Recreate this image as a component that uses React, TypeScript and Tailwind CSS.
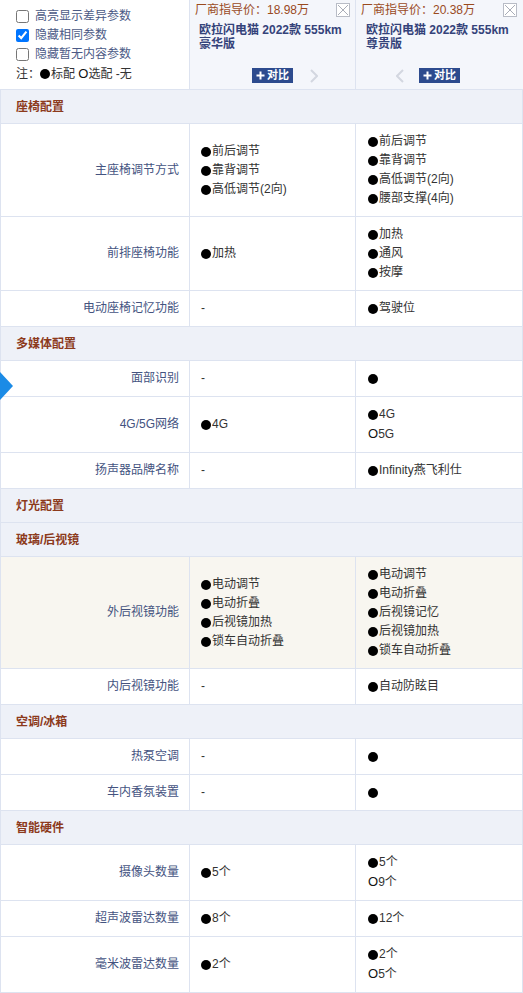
import React from "react";

type Row = { label: string; a: string[]; b: string[]; hl?: boolean };
type Section = { title: string; rows: Row[] };

const sections: Section[] = [
  {
    title: "座椅配置",
    rows: [
      { label: "主座椅调节方式", a: ["●前后调节", "●靠背调节", "●高低调节(2向)"], b: ["●前后调节", "●靠背调节", "●高低调节(2向)", "●腰部支撑(4向)"] },
      { label: "前排座椅功能", a: ["●加热"], b: ["●加热", "●通风", "●按摩"] },
      { label: "电动座椅记忆功能", a: ["-"], b: ["●驾驶位"] },
    ],
  },
  {
    title: "多媒体配置",
    rows: [
      { label: "面部识别", a: ["-"], b: ["●"] },
      { label: "4G/5G网络", a: ["●4G"], b: ["●4G", "O5G"] },
      { label: "扬声器品牌名称", a: ["-"], b: ["●Infinity燕飞利仕"] },
    ],
  },
  { title: "灯光配置", rows: [] },
  {
    title: "玻璃/后视镜",
    rows: [
      { label: "外后视镜功能", a: ["●电动调节", "●电动折叠", "●后视镜加热", "●锁车自动折叠"], b: ["●电动调节", "●电动折叠", "●后视镜记忆", "●后视镜加热", "●锁车自动折叠"], hl: true },
      { label: "内后视镜功能", a: ["-"], b: ["●自动防眩目"] },
    ],
  },
  {
    title: "空调/冰箱",
    rows: [
      { label: "热泵空调", a: ["-"], b: ["●"] },
      { label: "车内香氛装置", a: ["-"], b: ["●"] },
    ],
  },
  {
    title: "智能硬件",
    rows: [
      { label: "摄像头数量", a: ["●5个"], b: ["●5个", "O9个"] },
      { label: "超声波雷达数量", a: ["●8个"], b: ["●12个"] },
      { label: "毫米波雷达数量", a: ["●2个"], b: ["●2个", "O5个"] },
    ],
  },
];

function CloseBox() {
  return (
    <div className="w-[14px] h-[14px] border border-[#b8bcc6] bg-white flex items-center justify-center">
      <svg width="12" height="12" viewBox="0 0 12 12">
        <path d="M1 1 L11 11 M11 1 L1 11" stroke="#a9adb8" strokeWidth="1" />
      </svg>
    </div>
  );
}

function CompareBtn() {
  return (
    <div className="h-[15px] w-[41px] bg-[#2d4b8e] text-white text-[11px] font-bold leading-[15px] flex items-center justify-center gap-[2px]">
      <svg width="9" height="9" viewBox="0 0 9 9">
        <path d="M4.5 0.5 V8.5 M0.5 4.5 H8.5" stroke="#fff" strokeWidth="2" />
      </svg>
      <span>对比</span>
    </div>
  );
}

function Chevron({ dir }: { dir: "l" | "r" }) {
  return (
    <svg width="8" height="14" viewBox="0 0 8 14">
      <path d={dir === "r" ? "M1 1 L7 7 L1 13" : "M7 1 L1 7 L7 13"} stroke="#d3d7e0" strokeWidth="2" fill="none" />
    </svg>
  );
}

function Dot() {
  return <span className="inline-block w-[11px] h-[19px] align-top relative"><span className="absolute left-0 top-[5px] w-[10px] h-[10px] rounded-full bg-black" /></span>;
}

function Item({ t }: { t: string }) {
  if (t.startsWith("●")) {
    return (
      <div className="leading-[19px] text-[#333] whitespace-nowrap">
        <Dot />
        {t.slice(1)}
      </div>
    );
  }
  if (t.startsWith("O")) {
    return (
      <div className="leading-[19px] text-[#333] whitespace-nowrap">
        <span className="text-[#111] text-[13px]">O</span>
        {t.slice(1)}
      </div>
    );
  }
  return <div className="leading-[19px] text-[#333]">{t}</div>;
}

function Values({ items }: { items: string[] }) {
  return (
    <div className="flex flex-col">
      {items.map((t, i) => (
        <Item key={i} t={t} />
      ))}
    </div>
  );
}

export default function App() {
  return (
    <div className="w-[523px] bg-white text-[12px] font-['Liberation_Sans','Noto_Sans_CJK_SC',sans-serif] relative">
      {/* Header */}
      <div className="grid grid-cols-[190px_166px_167px] h-[90px] border-b border-[#dde3f0]">
        <div className="bg-white border-r border-[#dde3f0] pl-[16px] pt-[7px] flex flex-col text-[#4b5a86]">
          {[
            ["高亮显示差异参数", false],
            ["隐藏相同参数", true],
            ["隐藏暂无内容参数", false],
          ].map(([t, c], i) => (
            <label key={i} className="flex items-center h-[19px] gap-[6px]">
              <input type="checkbox" defaultChecked={c as boolean} className="w-[13px] h-[13px] m-0" />
              <span className="leading-[19px]">{t as string}</span>
            </label>
          ))}
          <div className="leading-[19px] text-[#333] whitespace-nowrap">
            注：<Dot />标配 <span className="text-[13px] text-[#111]">O</span>选配 -无
          </div>
        </div>
        <div className="bg-[#f4f6fb] border-r border-[#dde3f0] relative">
          <div className="pl-[5px] pt-[2px] leading-[16px] text-[#9a4a1e]">厂商指导价：18.98万</div>
          <div className="absolute right-[5px] top-[3px]"><CloseBox /></div>
          <div className="pl-[9px] pr-[4px] mt-[5px] leading-[14px] font-bold text-[#34437a]">欧拉闪电猫 2022款 555km<br />豪华版</div>
          <div className="flex justify-center mt-[17px] relative">
            <CompareBtn />
            <div className="absolute right-[37px] top-[1px]"><Chevron dir="r" /></div>
          </div>
        </div>
        <div className="bg-[#f4f6fb] relative">
          <div className="pl-[5px] pt-[2px] leading-[16px] text-[#9a4a1e]">厂商指导价：20.38万</div>
          <div className="absolute right-[6px] top-[3px]"><CloseBox /></div>
          <div className="pl-[10px] pr-[4px] mt-[5px] leading-[14px] font-bold text-[#34437a]">欧拉闪电猫 2022款 555km<br />尊贵版</div>
          <div className="flex justify-center mt-[17px] relative">
            <CompareBtn />
            <div className="absolute left-[40px] top-[1px]"><Chevron dir="l" /></div>
          </div>
        </div>
      </div>

      {/* Body */}
      <div className="border-l border-r border-[#dde3f0]">
        {sections.map((s) => (
          <div key={s.title}>
            <div className="h-[34px] bg-[#eef1f8] border-b border-[#dde3f0] flex items-center pl-[15px] font-bold text-[#8c3a1c]">
              {s.title}
            </div>
            {s.rows.map((r) => (
              <div
                key={r.label}
                className={`grid grid-cols-[189px_166px_166px] border-b border-[#dde3f0] ${r.hl ? "bg-[#f8f6f0]" : "bg-white"}`}
              >
                <div className="border-r border-[#dde3f0] flex items-center justify-end pr-[10px] py-[8px] text-[#44537f] leading-[19px]">
                  {r.label}
                </div>
                <div className="border-r border-[#dde3f0] flex items-center pl-[11px] py-[8px]">
                  <Values items={r.a} />
                </div>
                <div className="flex items-center pl-[12px] py-[8px]">
                  <Values items={r.b} />
                </div>
              </div>
            ))}
          </div>
        ))}
      </div>

      {/* blue side arrow */}
      <svg className="absolute left-0 top-[372px]" width="14" height="28" viewBox="0 0 14 28">
        <polygon points="0,0 13,14 0,28" fill="#1b8be6" />
      </svg>
    </div>
  );
}
